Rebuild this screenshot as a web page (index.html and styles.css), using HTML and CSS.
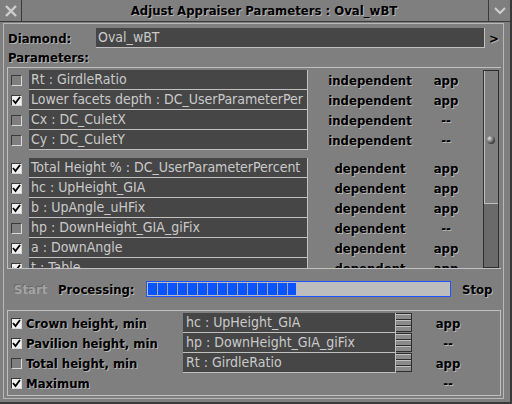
FILE: index.html
```html
<!DOCTYPE html>
<html lang="en">
<head>
	<meta charset="UTF-8">
	<title>Adjust Appraiser Parameters</title>
	<link rel="stylesheet" href="styles.css">
</head>
<body>
	<div class="window">
		<div class="titlebar">
			<span class="btn-close">
				<svg width="14" height="14" viewBox="0 0 14 14"><path d="M2 2L12 12M12 2L2 12" stroke="#cfcfcf" stroke-width="2.4"/></svg>
			</span>
			<span class="title">Adjust Appraiser Parameters : Oval_wBT</span>
			<span class="btn-menu">
				<svg width="12" height="8" viewBox="0 0 12 8"><path d="M1 1L6 6L11 1" stroke="#cfcfcf" stroke-width="2" fill="none"/></svg>
			</span>
		</div>
		<div class="body">
			<div class="row-diamond">
				<span class="label">Diamond:</span>
				<span class="field field-diamond">Oval_wBT</span>
				<span class="label arrow">&gt;</span>
			</div>
			<div class="label label-params">Parameters:</div>

			<div class="panel-list">
				<div class="list">
					<div class="group">
						<div class="item"><span class="check"></span><span class="field">Rt : GirdleRatio</span><span class="state">independent</span><span class="src">app</span></div>
						<div class="item"><span class="check on"></span><span class="field">Lower facets depth : DC_UserParameterPer</span><span class="state">independent</span><span class="src">app</span></div>
						<div class="item"><span class="check"></span><span class="field">Cx : DC_CuletX</span><span class="state">independent</span><span class="src">--</span></div>
						<div class="item"><span class="check"></span><span class="field">Cy : DC_CuletY</span><span class="state">independent</span><span class="src">--</span></div>
					</div>
					<div class="group">
						<div class="item"><span class="check on"></span><span class="field">Total Height % : DC_UserParameterPercent</span><span class="state">dependent</span><span class="src">app</span></div>
						<div class="item"><span class="check on"></span><span class="field">hc : UpHeight_GIA</span><span class="state">dependent</span><span class="src">app</span></div>
						<div class="item"><span class="check on"></span><span class="field">b : UpAngle_uHFix</span><span class="state">dependent</span><span class="src">app</span></div>
						<div class="item"><span class="check"></span><span class="field">hp : DownHeight_GIA_giFix</span><span class="state">dependent</span><span class="src">--</span></div>
						<div class="item"><span class="check on"></span><span class="field">a : DownAngle</span><span class="state">dependent</span><span class="src">app</span></div>
						<div class="item"><span class="check on"></span><span class="field">t : Table</span><span class="state">dependent</span><span class="src">app</span></div>
					</div>
				</div>
				<div class="scrollbar">
					<div class="slider"><span class="grip"></span></div>
					<div class="trough"></div>
				</div>
			</div>

			<div class="row-progress">
				<span class="label disabled">Start</span>
				<span class="label">Processing:</span>
				<div class="progress">
					<div class="progress-fill"></div>
				</div>
				<span class="label">Stop</span>
			</div>

			<div class="panel-limits">
				<div class="limits-names">
					<div class="limit"><span class="check on"></span><span class="label">Crown height, min</span></div>
					<div class="limit"><span class="check on"></span><span class="label">Pavilion height, min</span></div>
					<div class="limit"><span class="check"></span><span class="label">Total height, min</span></div>
					<div class="limit"><span class="check on"></span><span class="label">Maximum</span></div>
				</div>
				<div class="limits-values">
					<div class="limit"><span class="field field-limit">hc : UpHeight_GIA</span><span class="spin"><i></i><i></i><i></i></span><span class="src">app</span></div>
					<div class="limit"><span class="field field-limit">hp : DownHeight_GIA_giFix</span><span class="spin"><i></i><i></i><i></i></span><span class="src">--</span></div>
					<div class="limit"><span class="field field-limit">Rt : GirdleRatio</span><span class="spin"><i></i><i></i><i></i></span><span class="src">app</span></div>
					<div class="limit"><span class="field-none"></span><span class="src">--</span></div>
				</div>
			</div>
		</div>
	</div>
</body>
</html>
```

FILE: styles.css
```css
body{ margin: 0; background: #7f7f7f;}
.window{
	width: 512px; height: 404px; overflow: hidden; background: #7f7f7f;
	font-family: "DejaVu Sans Condensed", "DejaVu Sans", sans-serif; font-size: 13px;
	box-sizing: border-box; border-right: 2px solid #3a3a3a; border-bottom: 2px solid #3a3a3a;
}
.titlebar{
	display: flex; height: 22px; border-bottom: 1px solid #3a3a3a; box-sizing: border-box;
}
.btn-close{
	width: 21px; border-right: 1px solid #3a3a3a; display: flex; align-items: center; justify-content: center;
}
.title{
	flex: 1; text-align: center; line-height: 21px; font-weight: bold; color: #000;
	text-shadow: 1px 1px 0 #b4b4b4; padding-left: 18px;
}
.btn-menu{
	width: 21px; border-left: 1px solid #3a3a3a; display: flex; align-items: center; justify-content: center;
}
.body{
	margin: 1px 6px 0 3px; height: 376px; box-sizing: border-box;
	border: 1px solid #b8b8b8;
	padding: 4px 0 0 3px;
}
.label{
	font-weight: bold; color: #000; text-shadow: 1px 1px 0 #b4b4b4; white-space: nowrap;
}
.label.disabled{ color: #a4a4a4; text-shadow: -1px -1px 0 #6a6a6a;}
.field{
	display: block; background: #464646; color: #cacaca; font-size: 14px;
	border-right: 1px solid #c0c0c0; border-bottom: 1px solid #c0c0c0;
	white-space: nowrap; overflow: hidden; box-sizing: border-box; padding-left: 2px;
}
.row-diamond{ display: flex; align-items: center; height: 20px;}
.row-diamond .label{ width: 88px; padding-left: 1px;}
.field-diamond{ width: 389px; height: 20px; line-height: 19px;}
.row-diamond .arrow{ width: auto; padding-left: 4px;}
.label-params{ height: 17px; line-height: 17px; margin-top: 1px; padding-left: 1px;}

.panel-list{
	display: flex; height: 202px; margin-top: 1px; margin-right: 2px;
	border-top: 1px solid #c0c0c0; border-left: 1px solid #c0c0c0; border-bottom: 1px solid #c0c0c0;
	box-sizing: border-box; overflow: hidden;
}
.list{ flex: 1; padding-top: 2px; overflow: hidden;}
.group + .group{ margin-top: 8px;}
.item{ display: flex; align-items: center; height: 20px;}
.item .field{ width: 279px; height: 20px; line-height: 19px;}
.check{
	width: 11px; height: 11px; box-sizing: border-box; margin: 0 7px 0 3px;
	border-top: 1px solid #3a3a3a; border-left: 1px solid #3a3a3a;
	border-right: 1px solid #d8d8d8; border-bottom: 1px solid #d8d8d8;
	background: #7f7f7f; flex: none;
}
.check.on{
	background: #f0f0f0 url("data:image/svg+xml,%3Csvg xmlns='http://www.w3.org/2000/svg' width='9' height='9'%3E%3Cpath d='M1 4L3.5 7L8 1' stroke='black' stroke-width='1.8' fill='none'/%3E%3C/svg%3E") center/9px 9px no-repeat;
}
.state{ width: 124px; text-align: center; font-weight: bold; color: #000; text-shadow: 1px 1px 0 #b4b4b4;}
.src{ width: 28px; text-align: center; font-weight: bold; color: #000; text-shadow: 1px 1px 0 #b4b4b4;}
.scrollbar{
	width: 16px; margin: 2px 2px 0 0; display: flex; flex-direction: column;
	border: 1px solid #2e2e2e; box-sizing: border-box; height: 198px;
}
.slider{
	height: 133px; box-sizing: border-box; border-left: 1px solid #c0c0c0; border-bottom: 1px solid #c0c0c0;
	display: flex; align-items: center; justify-content: center; padding-top: 6px;
}
.grip{
	width: 8px; height: 8px; border-radius: 50%; margin-left: -2px;
	background: radial-gradient(circle at 30% 30%, #e0e0e0 0, #8a8a8a 35%, #2a2a2a 80%);
}
.trough{ flex: 1; background: #6a6a6a;}

.row-progress{ display: flex; align-items: center; height: 20px; margin-top: 10px;}
.row-progress .label:first-child{ padding-left: 7px; width: 44px;}
.row-progress .label:nth-child(2){ width: 88px;}
.progress{
	width: 305px; height: 16px; box-sizing: border-box; border: 1px solid #1c55ff;
	background: #bdbdbd; margin-right: 11px; padding: 1px;
}
.progress-fill{
	width: 148px; height: 12px;
	background: repeating-linear-gradient(90deg, #0a54ff 0 9px, #a8a8b4 9px 10px);
}

.panel-limits{
	display: flex; height: 86px; margin: 11px 2px 0 0; box-sizing: border-box;
	border: 1px solid #c0c0c0; padding-top: 2px;
}
.limits-names{ width: 175px;}
.limit{ display: flex; align-items: center; height: 20px;}
.limit .check{ margin-right: 4px;}
.field-limit{ width: 213px; height: 20px; line-height: 19px; padding-left: 3px;}
.field-none{ width: 229px;}
.spin{
	width: 16px; height: 19px; display: flex; flex-direction: column; background: #2e2e2e;
	align-self: flex-start; box-sizing: border-box; padding: 1px 1px 0 0;
}
.spin i{
	flex: 1; background: #8a8a8a; border-top: 1px solid #c0c0c0; margin-bottom: 1px;
}
.limits-values .src{ margin-left: 22px;}
```
